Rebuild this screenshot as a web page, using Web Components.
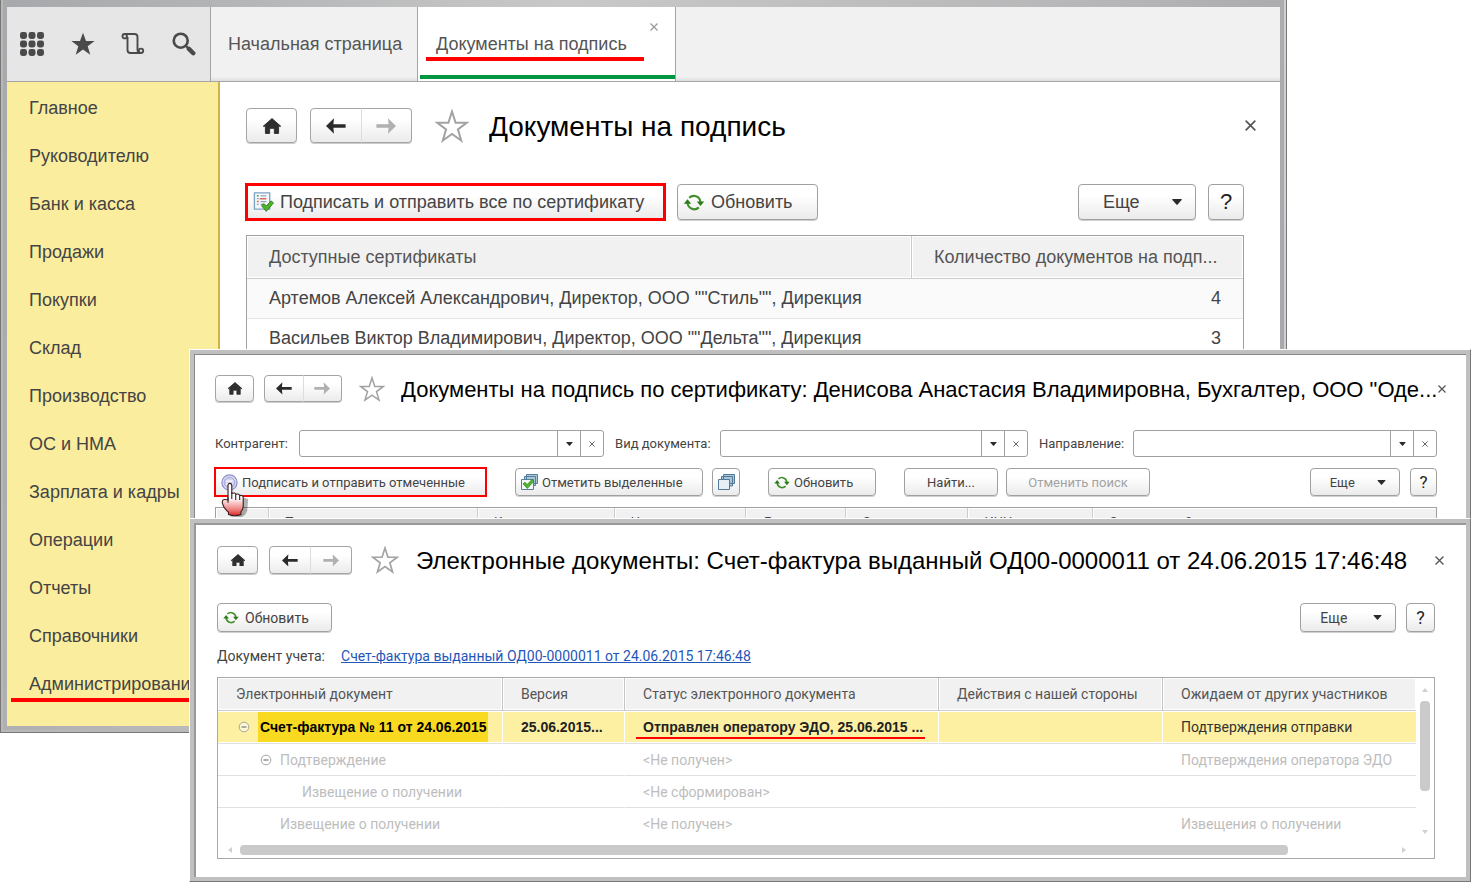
<!DOCTYPE html>
<html lang="ru">
<head>
<meta charset="utf-8">
<title>Документы на подпись</title>
<style>
  body { margin: 0; background: #fff; font-family: "Liberation Sans", Arial, sans-serif; color: #444; }
</style>
</head>
<body>
<app-desktop></app-desktop>
<script>
const ICONS = {
  apps: ['0 0 24 24', [3.5, 12, 20.5].map(y => [3.5, 12, 20.5].map(x => `<rect x="${x - 3.5}" y="${y - 3.5}" width="7" height="7" rx="2.4" fill="#4a4a4a"/>`).join('')).join('')],
  starFull: ['0 0 24 24', '<path fill="#4a4a4a" d="M12 0.8l3 8.2h8.6l-6.9 5.2 2.6 8.6-7.3-5.2-7.3 5.2 2.6-8.6L.4 9H9z"/>'],
  star: ['0 0 34 34', '<path fill="#fff" stroke="#a2a2a2" stroke-width="2" d="M17 2.500l3.600 11.200h11.200l-8.900 6.700 3.300 11.100L17 25l-9.200 6.500 3.300-11.100-8.900-6.700h11.200z"/>'],
  history: ['0 0 24 24', '<g fill="none" stroke="#4a4a4a" stroke-width="1.900"><path d="M4 2h9.500q3 0 3 3v12.500q0 3.500 3 3.500"/><path d="M6.500 5v13q0 3 3 3H20"/><circle cx="3.700" cy="4.200" r="2.200"/><circle cx="20" cy="18.800" r="2.200"/></g>'],
  search: ['0 0 22 22', '<circle cx="8" cy="8" r="6.400" fill="none" stroke="#4a4a4a" stroke-width="2.400"/><path stroke="#4a4a4a" stroke-width="4" stroke-linecap="round" d="M15.500 15.500l4 4"/><path stroke="#4a4a4a" stroke-width="2" d="M12.500 12.500l3 3"/>'],
  home: ['0 0 20 17', '<path fill="#2f2f2f" stroke="#2f2f2f" stroke-linejoin="round" d="M10 .6L19.300 8.800H17V16.400H12.500V11H7.500V16.400H3V8.800H.700z"/>'],
  back: ['0 0 20 16', '<path fill="#2b2b2b" d="M0 8L8 .3 7.400 6.300H19.600V9.700H7.400L8 15.700z"/>'],
  forward: ['0 0 20 16', '<path fill="#b0b0b0" d="M20 8L12 .3l.6 6H.4v3.400h12.200l-.6 6z"/>'],
  refresh: ['0 0 20 16', '<g fill="none" stroke="#3f8f2a" stroke-width="2"><path d="M5.500 3.600A6.200 6.200 0 0 1 16 7.500"/><path d="M14.500 12.600A6.200 6.200 0 0 1 4 8.500"/></g><path fill="#2c7a1a" d="M12.600 7h7L16.100 11.300zM.4 9.200h7L3.900 4.900z"/>'],
  caret: ['0 0 10 6', '<path fill="#2b2b2b" d="M.8 0h8.400q1 0 .4.900L5.600 5.500q-.6.600-1.200 0L.4.900Q-.2 0 .8 0z"/>'],
  close: ['0 0 10 10', '<path fill="none" stroke="currentColor" stroke-width="1.500" d="M.6.6l8.800 8.800M9.400.6L.6 9.400"/>'],
  minus: ['0 0 12 12', '<circle cx="6" cy="6" r="4.800" fill="#fff" fill-opacity=".5" stroke="#a5a5a0"/><path stroke="#777" stroke-width="1.200" d="M3.500 6h5"/>'],
  sign: ['0 0 22 22', '<path fill="#f4f8fc" stroke="#7fa3c4" stroke-width="1.400" d="M1.500 1.500h16v17h-16z"/><path stroke="#8fa5bb" stroke-width="1.300" d="M8 4.500h6M4 7.500h2M8 10.500h6M4 13.500h2M8 13.500h4"/><path stroke="#d96b54" stroke-width="1.500" d="M7 7.500h7M4 10.500h2"/><path stroke="#55a045" stroke-width="1.500" d="M4 4.500h2"/><path fill="#4fb52a" stroke="#2f7d1c" d="M9 14.800l2.600-2 2.300 2.400 5.200-5.400 2.300 2.300-7.500 8.700z"/>'],
  seal: ['0 0 18 18', '<circle cx="9" cy="9" r="8" fill="#dcdcf2" stroke="#8f8fc8" stroke-width="1.300"/><circle cx="9" cy="9" r="5.600" fill="#cfcfec" stroke="#a0a0d4"/><path stroke="#fff" stroke-width="1.500" d="M5.500 7.500h7M5.500 10.500h7"/>'],
  markAll: ['0 0 17 16', '<g fill="#a9c6d8" stroke="#557f9c"><path d="M5.500.5h11v9h-11zM3.500 2.500h11v9h-11z"/><path fill="#f3f8fb" d="M.500 5.500h12v10h-12z"/></g><path fill="#4fb52a" stroke="#2f7d1c" stroke-width=".7" d="M2 9.800l1.900-1.600 2.300 2.300 5-5.300 1.800 1.800-6.700 7.500z"/>'],
  copies: ['0 0 17 16', '<g fill="#a9c6d8" stroke="#53799a"><path d="M5.500.5h11v9h-11zM3.500 2.500h11v9.500h-11z"/><path fill="#e6eff6" d="M.500 5.500h11v10h-11z"/></g>'],
  triUp: ['0 0 6 4', '<path fill="#d0d0d0" d="M0 4L3 0l3 4z"/>'],
  triDown: ['0 0 6 4', '<path fill="#d0d0d0" d="M0 0h6L3 4z"/>'],
  triLeft: ['0 0 4 6', '<path fill="#d0d0d0" d="M4 0v6L0 3z"/>'],
  triRight: ['0 0 4 6', '<path fill="#d0d0d0" d="M0 0l4 3-4 3z"/>'],
  hand: ['0 0 32 38', '<defs><linearGradient id="g" x2="0" y2="1"><stop offset=".45" stop-color="#fff"/><stop offset=".85" stop-color="#ec7070"/><stop offset="1" stop-color="#d22"/></linearGradient></defs><path fill="#000" opacity=".3" d="M10 36.500l12 .5q5-2 6-7l1-12-6-2z"/><path fill="url(#g)" stroke="#3a2020" stroke-width="1.200" stroke-linejoin="round" d="M7.500 19V3.500q0-2.300 2-2.300t2 2.300V12q3.600-1.400 4.200 1 3.300-1.300 4.200 1.200 3.800-.8 3.800 2.300v8.500q0 4-2.400 6.500V34.500q-6 2.500-13.300 0V32Q3 28 1.500 22.500 1 18 4.500 18.500z"/><path stroke="#3a2020" stroke-width="1.200" d="M11.500 11v7M15.700 13v6M19.900 14.200V19M7.500 16v6"/>']
};

function define(name, html, setup) {
  const template = document.createElement('template');
  template.innerHTML = html;
  customElements.define(name, class extends HTMLElement {
    connectedCallback() {
      if (this.shadowRoot) return;
      this.attachShadow({ mode: 'open' }).append(template.content.cloneNode(true));
      if (setup) setup(this.shadowRoot, this);
    }
  });
}

define('ui-icon', `<style>
  :host { display: block; flex: none; }
  svg { display: block; width: 100%; height: 100%; }
</style><svg aria-hidden="true"></svg>`, (root, host) => {
  const [box, body] = ICONS[host.getAttribute('name')];
  const svg = root.querySelector('svg');
  svg.setAttribute('viewBox', box);
  svg.innerHTML = body;
});

define('ui-button', `<style>
  :host { display: block; flex: none; height: var(--button-height); }
  :host([marked]) { margin: -1px; height: calc(var(--button-height) + 2px); }
  button { box-sizing: border-box; width: 100%; height: 100%; display: flex; align-items: center; justify-content: center;
    gap: var(--button-gap); padding: 0 6px; margin: 0; font: inherit; color: inherit; white-space: nowrap;
    border: 1px solid #a0a0a0; border-radius: 4px; background: linear-gradient(#fff 30%, #ebebeb); box-shadow: 0 1px 0 #d0d0d0; }
  :host([start]) button { justify-content: flex-start; padding: 0 5px; }
  :host([menu]) button { justify-content: space-between; padding: 0 13px 0 calc(var(--button-height) * 2 / 3); }
  :host([marked]) button { border: var(--mark) solid #f00; border-radius: 0; box-shadow: none; }
  :host([off]) button { color: #a3a3a3; }
  :host([help]) button { color: #222; font-size: var(--help-size); padding: 0; }
</style><button type="button"><slot></slot></button>`, (root, host) => {
  if (host.hasAttribute('off')) root.querySelector('button').disabled = true;
  if (host.title) root.querySelector('button').setAttribute('aria-label', host.title);
});

define('form-header', `<style>
  :host { display: flex; align-items: center; height: var(--nav-height); color: #000; }
  button { box-sizing: border-box; flex: none; height: 100%; margin: 0; padding: 0; display: flex; align-items: center; justify-content: center;
    border: 1px solid #a5a5a5; border-radius: 4px; background: linear-gradient(#fff 30%, #ebebeb); box-shadow: 0 1px 0 #ccc; }
  .home { width: var(--home-width); margin-right: var(--nav-gap); }
  .pair { display: flex; height: 100%; width: var(--pair-width); }
  .pair button { flex: 1; }
  .pair button:first-child { border-radius: 4px 0 0 4px; }
  .pair button:last-child { border-radius: 0 4px 4px 0; border-left-color: #ddd; margin-left: -1px; }
  button ui-icon { width: var(--nav-icon); height: calc(var(--nav-icon) * 4 / 5); }
  .fav { border: 0; background: none; box-shadow: none; margin: 0 var(--star-after) 0 var(--star-before); }
  .fav ui-icon { width: var(--star); height: var(--star); }
  h1 { flex: 1; min-width: 0; margin: 2px 0 0; font: var(--title-size)/32px "Liberation Sans", Arial, sans-serif; white-space: nowrap; overflow: hidden; }
  .close { border: 0; background: none; box-shadow: none; color: #555; margin-right: var(--close-shift); }
  .close ui-icon { width: var(--close); height: var(--close); }
</style>
<button class="home" type="button" aria-label="Домой"><ui-icon name="home"></ui-icon></button>
<div class="pair"><button type="button" aria-label="Назад"><ui-icon name="back"></ui-icon></button><button type="button" aria-label="Вперед"><ui-icon name="forward"></ui-icon></button></div>
<button class="fav" type="button" aria-label="Избранное"><ui-icon name="star"></ui-icon></button>
<h1><slot></slot></h1>
<button class="close" type="button" aria-label="Закрыть"><ui-icon name="close"></ui-icon></button>`);

define('filter-field', `<style>
  :host { display: flex; align-items: center; height: 27px; }
  label { flex: none; width: var(--label-width); white-space: nowrap; }
  .box { box-sizing: border-box; flex: 1; min-width: 0; height: 100%; display: flex; border: 1px solid #a0a0a0; border-radius: 3px; overflow: hidden; background: #fff; }
  input { flex: 1; min-width: 0; border: 0; padding: 0 6px; font: inherit; background: none; }
  button { flex: none; width: 23px; margin: 0; padding: 0; border: 0; border-left: 1px solid #a0a0a0; background: none; color: #555; display: flex; align-items: center; justify-content: center; }
  .pick { width: 7px; height: 4px; } .clear { width: 6px; height: 6px; }
</style>
<label for="f"></label><div class="box"><input id="f" type="text"><button type="button" aria-label="Выбрать"><ui-icon class="pick" name="caret"></ui-icon></button><button type="button" aria-label="Очистить"><ui-icon class="clear" name="close"></ui-icon></button></div>`,
(root, host) => { root.querySelector('label').textContent = host.getAttribute('label'); });

define('section-menu', `<style>
  :host { display: block; box-sizing: border-box; width: 213px; flex: none; padding: 2px 0 18px; background: #fbed9e; border-right: 2px solid #cbb545; }
  a { display: flex; align-items: center; height: 48px; padding-left: 22px; color: #444; text-decoration: none; white-space: nowrap; font-size: 18px; position: relative; }
  a.marked::after { content: ""; position: absolute; left: 4px; right: 0; bottom: 6px; height: 4px; background: #f00; }
</style><nav></nav>`, root => {
  const items = ['Главное', 'Руководителю', 'Банк и касса', 'Продажи', 'Покупки', 'Склад', 'Производство', 'ОС и НМА', 'Зарплата и кадры', 'Операции', 'Отчеты', 'Справочники', 'Администрирование'];
  root.querySelector('nav').innerHTML = items.map((t, i) => `<a href="#"${i === 12 ? ' class="marked"' : ''}>${t}</a>`).join('');
});

define('tab-strip', `<style>
  :host { display: flex; height: 74px; border-bottom: 1px solid #a5a5a5; background: linear-gradient(#f1f1f1 94%, #dedede); font-size: 18px; }
  .tools { box-sizing: border-box; width: 204px; flex: none; display: flex; align-items: center; justify-content: space-between; padding: 0 14px 0 13px; background: #e6e6e6; border-right: 1px solid #a5a5a5; }
  .tools button, .close { border: 0; background: none; padding: 0; margin: 0; color: #999; }
  .tools ui-icon { width: 24px; height: 24px; }
  .tab { box-sizing: border-box; position: relative; display: flex; align-items: center; color: #555; text-decoration: none; border-right: 1px solid #a5a5a5; white-space: nowrap; }
  .first { width: 207px; padding-left: 17px; }
  .current { width: 258px; padding-left: 18px; background: #fff; box-shadow: inset 0 -2px #fff, inset 2px 0 #fff, inset 0 -6px #00963f; }
  .current::after { content: ""; position: absolute; left: 8px; width: 218px; top: 50px; height: 4px; background: #f00; }
  .close { position: absolute; right: 17px; top: 16px; }
  .close ui-icon { width: 8px; height: 8px; }
</style>
<div class="tools">
<button type="button" aria-label="Меню"><ui-icon name="apps"></ui-icon></button><button type="button" aria-label="Избранное"><ui-icon name="starFull"></ui-icon></button><button type="button" aria-label="История"><ui-icon name="history"></ui-icon></button><button type="button" aria-label="Поиск"><ui-icon name="search"></ui-icon></button></div>
<a class="tab first" href="#">Начальная страница</a>
<div class="tab current">Документы на подпись<button class="close" type="button" aria-label="Закрыть вкладку"><ui-icon name="close"></ui-icon></button></div>`);

define('certificate-table', `<style>
  :host { display: block; }
  table { width: 100%; border-collapse: separate; border-spacing: 0; table-layout: fixed; border: 1px solid #a0a0a0; font-size: 18px; }
  col.count { width: 332px; }
  th, td { height: 39px; padding: 0 22px; text-align: left; font-weight: normal; white-space: nowrap; border-bottom: 1px solid #e4e4e4; overflow: hidden; }
  th { height: 42px; background: #f1f1f1; color: #555; border-bottom-color: #ccc; box-shadow: inset 1px 1px #fff, inset -1px -1px #fff; }
  th + th { border-left: 1px solid #ccc; }
  td + td { text-align: right; }
  tbody tr:first-child { background: #fafafa; }
</style><table><colgroup><col><col class="count"></colgroup>
<thead><tr><th>Доступные сертификаты</th><th>Количество документов на подп...</th></tr></thead>
<tbody><tr><td>Артемов Алексей Александрович, Директор, ООО ""Стиль"", Дирекция</td><td>4</td></tr>
<tr><td>Васильев Виктор Владимирович, Директор, ООО ""Дельта"", Дирекция</td><td>3</td></tr></tbody></table>`);

define('main-window', `<style>
  :host { display: block; box-sizing: border-box; padding: 7px; background: linear-gradient(100deg, #a6a8ab, #c8c8c8 40%, #b5b5b7 80%, #a3a4a8); box-shadow: inset -1px 0 #777, inset 1px -1px #777, inset -3px 0 #d0d0d0, inset 3px -3px #b8b8b8; font-size: 18px;
    --button-height: 36px; --button-gap: 6px; --help-size: 22px; --mark: 3px; --nav-height: 35px; --home-width: 51px; --nav-gap: 13px; --pair-width: 102px; --nav-icon: 20px; --star: 34px; --star-before: 23px; --star-after: 20px; --title-size: 28px; --close: 11px; --close-shift: -12px; }
  .body { display: flex; background: #fff; }
  main { flex: 1; min-width: 0; padding: 26px 36px 0 26px; }
  .bar { display: flex; gap: 12px; margin: 41px 0 15px; }
  .space { flex: 1; }
  .sign { width: 421px; } .refresh { width: 141px; } .more { width: 118px; } .help { width: 36px; }
  .sign ui-icon { width: 21px; height: 22px; } .refresh ui-icon { width: 22px; height: 17px; } .more ui-icon { width: 10px; height: 6px; }
</style>
<tab-strip></tab-strip>
<div class="body"><section-menu></section-menu><main>
<form-header>Документы на подпись</form-header>
<div class="bar"><ui-button class="sign" start marked><ui-icon name="sign"></ui-icon>Подписать и отправить все по сертификату</ui-button>
<ui-button class="refresh" start><ui-icon name="refresh"></ui-icon>Обновить</ui-button><span class="space"></span>
<ui-button class="more" menu>Еще<ui-icon name="caret"></ui-icon></ui-button><ui-button class="help" help>?</ui-button></div>
<certificate-table></certificate-table></main></div>`);

const FRAME = `background: #fff; border: 1px solid #fff; border-right-color: #777; border-bottom-color: #777;`;

define('certificate-window', `<style>
  :host { display: block; box-sizing: border-box; ${FRAME} font-family: Roboto, "Liberation Sans", sans-serif; font-size: 13px;
    --button-height: 28px; --button-gap: 4px; --help-size: 17px; --mark: 2px; --nav-height: 27px; --home-width: 39px; --nav-gap: 10px; --pair-width: 78px; --nav-icon: 16px; --star: 26px; --star-before: 17px; --star-after: 16px; --title-size: 22px; --close: 8px; --close-shift: -9px; }
  .frame { border: 4px solid #c0c0c0; }
  .inner { border-top: 1px solid #888; border-left: 1px solid #888; padding: 20px 29px 0 20px; }
  .filters { display: flex; gap: 11px; margin: 28px 0 11px; }
  filter-field { flex: 1 1 390px; }
  filter-field.kind { flex-basis: 414px; }
  filter-field.way { flex-basis: 399px; }
  .bar { display: flex; position: relative; margin-bottom: 11px; }
  .sign { width: 273px; margin-right: 28px; } .mark { width: 188px; margin-right: 9px; } .copies { width: 28px; margin-right: 28px; }
  .refresh { width: 108px; margin-right: 28px; } .find { width: 94px; margin-right: 8px; } .cancel { width: 144px; } .space { flex: 1; }
  .more { width: 90px; margin-right: 10px; } .help { width: 27px; }
  .sign ui-icon { width: 17px; height: 17px; } .mark ui-icon, .copies ui-icon { width: 17px; height: 16px; } .refresh ui-icon { width: 16px; height: 13px; } .more ui-icon { width: 9px; height: 5px; }
  .hand { position: absolute; left: 6px; top: 14px; width: 30px; height: 36px; z-index: 1; }
  table { width: 100%; border-collapse: separate; border-spacing: 0; table-layout: fixed; border: 1px solid #a0a0a0; border-bottom: 0; }
  th { height: 26px; padding: 0 16px; text-align: left; font-weight: normal; background: #f1f1f1; box-shadow: inset 1px 1px #fff; white-space: nowrap; overflow: hidden; }
  th + th { border-left: 1px solid #ccc; }
</style>
<div class="frame"><div class="inner">
<form-header>Документы на подпись по сертификату: Денисова Анастасия Владимировна, Бухгалтер, ООО "Оде...</form-header>
<div class="filters"><filter-field label="Контрагент:" style="--label-width: 84px"></filter-field><filter-field class="kind" label="Вид документа:" style="--label-width: 105px"></filter-field><filter-field class="way" label="Направление:" style="--label-width: 94px"></filter-field></div>
<div class="bar"><ui-button class="sign" start marked><ui-icon name="seal"></ui-icon>Подписать и отправить отмеченные</ui-button>
<ui-button class="mark" start><ui-icon name="markAll"></ui-icon>Отметить выделенные</ui-button>
<ui-button class="copies" title="Снять отметки"><ui-icon name="copies"></ui-icon></ui-button>
<ui-button class="refresh" start><ui-icon name="refresh"></ui-icon>Обновить</ui-button>
<ui-button class="find">Найти...</ui-button><ui-button class="cancel" off>Отменить поиск</ui-button><span class="space"></span>
<ui-button class="more" menu>Еще<ui-icon name="caret"></ui-icon></ui-button><ui-button class="help" help>?</ui-button>
<ui-icon class="hand" name="hand"></ui-icon></div>
<table><colgroup><col style="width:4.300%"><col style="width:17.100%"><col style="width:11.200%"><col style="width:10.800%"><col style="width:8.200%"><col style="width:10%"><col style="width:10.200%"><col></colgroup>
<thead><tr><th></th><th>Тип</th><th>Контрагент</th><th>Номер</th><th>Дата</th><th>Сумма</th><th>ИНН</th><th>Электронный документ</th></tr></thead></table>
</div></div>`);

define('document-tree', `<style>
  :host { display: grid; grid-template-columns: minmax(0, 1fr) 18px; border: 1px solid #a8a8a8; font-size: 14px; }
  table { width: 100%; border-collapse: separate; border-spacing: 0; table-layout: fixed; }
  th, td { height: 31px; padding: 0 0 0 18px; text-align: left; font-weight: normal; white-space: nowrap; overflow: hidden; border-bottom: 1px solid #e0e0e0; color: #bdbdbd; }
  th { height: 32px; background: #f1f1f1; color: #555; border-bottom-color: #ccc; box-shadow: inset 1px 1px #fff, inset -1px -1px #fff; }
  th + th { border-left: 1px solid #c4c4c4; }
  td + td { border-left: 1px solid transparent; }
  tr:last-child td { height: 32px; border-bottom-color: transparent; }
  .current td { height: 32px; background: #fdf0a2; color: #333; box-shadow: inset 0 1px #fff, inset 0 -1px #fff; background-clip: padding-box; }
  .current td + td { border-left-color: #fff; }
  .current .bold { font: bold 14px "Liberation Sans", Arial, sans-serif; color: #222; }
  .node { display: flex; align-items: center; gap: 8px; }
  .node ui-icon { width: 12px; height: 12px; }
  .l0 { padding-left: 2px; } .l1 { padding-left: 24px; } .leaf { padding-left: 44px; } .l2 { padding-left: 66px; }
  .l0 span { padding: 0 2px; background: #fada20; color: #000; line-height: 30px; }
  .marked { position: relative; display: inline-block; }
  .marked::after { content: ""; position: absolute; left: -7px; right: -2px; bottom: -4px; height: 2px; background: #f00; }
  .v { display: flex; flex-direction: column; align-items: center; padding: 10px 0 7px; }
  .v i { width: 10px; height: 90px; margin: 9px 0 auto; border-radius: 4px; background: #cacaca; }
  .h { display: flex; align-items: center; height: 17px; padding: 0 10px; }
  .h i { width: 89%; height: 10px; margin: 0 auto 0 8px; border-radius: 4px; background: #cacaca; }
  .v ui-icon { width: 6px; height: 4px; } .h ui-icon { width: 4px; height: 6px; }
</style>
<table><colgroup><col style="width:23.700%"><col style="width:10.200%"><col style="width:26.200%"><col style="width:18.700%"><col></colgroup>
<thead><tr><th>Электронный документ</th><th>Версия</th><th>Статус электронного документа</th><th>Действия с нашей стороны</th><th>Ожидаем от других участников</th></tr></thead>
<tbody>
<tr class="current"><td class="bold"><div class="node l0"><ui-icon name="minus"></ui-icon><span>Счет-фактура № 11 от 24.06.2015</span></div></td><td class="bold">25.06.2015...</td><td class="bold" style="overflow:visible"><span class="marked">Отправлен оператору ЭДО, 25.06.2015 ...</span></td><td></td><td>Подтверждения отправки</td></tr>
<tr><td><div class="node l1"><ui-icon name="minus"></ui-icon>Подтверждение</div></td><td></td><td>&lt;Не получен&gt;</td><td></td><td>Подтверждения оператора ЭДО</td></tr>
<tr><td><div class="node l2">Извещение о получении</div></td><td></td><td>&lt;Не сформирован&gt;</td><td></td><td></td></tr>
<tr><td><div class="node leaf">Извещение о получении</div></td><td></td><td>&lt;Не получен&gt;</td><td></td><td>Извещения о получении</td></tr>
</tbody></table>
<div class="v"><ui-icon name="triUp"></ui-icon><i></i><ui-icon name="triDown"></ui-icon></div>
<div class="h"><ui-icon name="triLeft"></ui-icon><i></i><ui-icon name="triRight"></ui-icon></div>`);

define('document-window', `<style>
  :host { display: block; box-sizing: border-box; ${FRAME} font-family: Roboto, "Liberation Sans", sans-serif; font-size: 14px;
    --button-height: 29px; --button-gap: 6px; --help-size: 18px; --nav-height: 28px; --home-width: 41px; --nav-gap: 11px; --pair-width: 83px; --nav-icon: 16px; --star: 28px; --star-before: 19px; --star-after: 17px; --title-size: 24px; --close: 9px; --close-shift: -9px; }
  .frame { border: 4px solid #c0c0c0; }
  .inner { border-top: 2px solid #999; border-left: 2px solid #999; padding: 21px 31px 18px 21px; }
  .bar { display: flex; justify-content: flex-end; gap: 10px; margin: 29px 0 12px; }
  .refresh { width: 115px; margin-right: auto; } .more { width: 96px; } .help { width: 29px; }
  .refresh ui-icon { width: 16px; height: 13px; } .more ui-icon { width: 9px; height: 5px; }
  p { display: flex; gap: 16px; margin: 0 0 9px; line-height: 24px; white-space: nowrap; }
  a { color: #1f56b8; text-decoration: underline; }
</style>
<div class="frame"><div class="inner">
<form-header>Электронные документы: Счет-фактура выданный ОД00-0000011 от 24.06.2015 17:46:48</form-header>
<div class="bar"><ui-button class="refresh" start><ui-icon name="refresh"></ui-icon>Обновить</ui-button><ui-button class="more" menu>Еще<ui-icon name="caret"></ui-icon></ui-button><ui-button class="help" help>?</ui-button></div>
<p><span>Документ учета:</span><a href="#">Счет-фактура выданный ОД00-0000011 от 24.06.2015 17:46:48</a></p>
<document-tree></document-tree>
</div></div>`);

define('app-desktop', `<style>
  :host { display: block; position: relative; min-height: 100vh; overflow: hidden; }
  main-window { position: absolute; top: 0; left: 0; right: 184px; }
  certificate-window { position: absolute; top: 349px; left: 189px; right: 0; }
  document-window { position: absolute; top: 518px; left: 189px; right: 0; }
</style>
<main-window></main-window><certificate-window></certificate-window><document-window></document-window>`);
</script>
</body>
</html>
